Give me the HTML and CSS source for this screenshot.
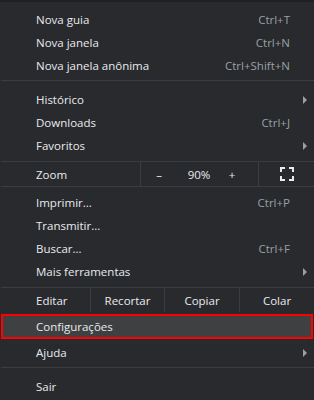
FILE: index.html
```html
<!DOCTYPE html>
<html lang="pt-BR">
<head>
    <meta charset="UTF-8">
    <title>Menu</title>
    <link rel="stylesheet" href="styles.css">
</head>
<body>
    <div class="menu">
        <div class="item"><span>Nova guia</span><span class="key">Ctrl+T</span></div>
        <div class="item"><span>Nova janela</span><span class="key">Ctrl+N</span></div>
        <div class="item"><span>Nova janela anônima</span><span class="key">Ctrl+Shift+N</span></div>
        <div class="sep"></div>
        <div class="item"><span>Histórico</span><span class="arrow"></span></div>
        <div class="item"><span>Downloads</span><span class="key">Ctrl+J</span></div>
        <div class="item"><span>Favoritos</span><span class="arrow"></span></div>
        <div class="line"></div>
        <div class="group zoom">
            <div class="cell first">Zoom</div>
            <div class="cell zoomctl"><span class="minus">–</span><span class="pct">90%</span><span class="plus">+</span></div>
            <div class="cell full">
                <svg width="14" height="14" viewBox="0 0 14 14" fill="none" stroke="#e8eaed" stroke-width="2">
                    <path d="M1 5V1h4M9 1h4v4M13 9v4H9M5 13H1V9"/>
                </svg>
            </div>
        </div>
        <div class="line bottom"></div>
        <div class="item"><span>Imprimir...</span><span class="key">Ctrl+P</span></div>
        <div class="item"><span>Transmitir...</span></div>
        <div class="item"><span>Buscar...</span><span class="key">Ctrl+F</span></div>
        <div class="item"><span>Mais ferramentas</span><span class="arrow"></span></div>
        <div class="line"></div>
        <div class="group edit">
            <div class="cell first">Editar</div>
            <div class="cell">Recortar</div>
            <div class="cell">Copiar</div>
            <div class="cell">Colar</div>
        </div>
        <div class="item selected"><span>Configurações</span></div>
        <div class="item"><span>Ajuda</span><span class="arrow"></span></div>
        <div class="sep"></div>
        <div class="item"><span>Sair</span></div>
    </div>
</body>
</html>
```

FILE: styles.css
```css
body {
    margin: 0;
    background: #292a2d;
    font-family: "Open Sans", "Noto Sans", sans-serif;
    font-size: 11.5px;
    color: #e8eaed;
}
.menu {
    width: 314px;
    height: 400px;
    border-top: 2px solid #202124;
    padding-top: 6px;
    box-sizing: border-box;
    overflow: hidden;
}
.item {
    display: flex;
    align-items: center;
    height: 23px;
    padding: 0 24px 0 36px;
    position: relative;
}
.item .key {
    margin-left: auto;
    color: #9aa0a6;
}
.arrow {
    position: absolute;
    right: 7px;
    top: 8px;
    width: 0;
    height: 0;
    border-top: 4px solid transparent;
    border-bottom: 4px solid transparent;
    border-left: 4px solid #9aa0a6;
}
.sep {
    height: 1px;
    background: #3c3d40;
    margin: 3px 0 7px 1px;
}
.line {
    height: 1px;
    background: #3c3d40;
    margin: 4px 0 0 1px;
}
.line.bottom {
    margin: 0 0 4px 1px;
}
.group {
    display: flex;
    height: 24px;
}
.cell {
    display: flex;
    align-items: center;
    justify-content: center;
    border-left: 1px solid #3c3d40;
}
.cell.first {
    border-left: none;
    justify-content: flex-start;
    padding-left: 36px;
}
.zoom .first { width: 104px; }
.zoomctl {
    width: 111px;
    justify-content: flex-start;
    padding-left: 6px;
}
.zoomctl span { text-align: center; }
.minus { width: 24px; }
.pct { width: 40px; margin-left: 8px; }
.plus { width: 24px; margin-left: 1px; }
.full { flex: 1; }
.edit .first { width: 54px; }
.edit .cell:nth-child(2) { width: 73px; }
.edit .cell:nth-child(3) { width: 74px; }
.edit .cell:nth-child(4) { flex: 1; }
.item.selected {
    background: #3f4042;
    outline: 2px solid #ff0000;
    outline-offset: -2px;
    height: 25px;
    margin: 2px 1px 2px 1px;
    padding-left: 35px;
}
```
